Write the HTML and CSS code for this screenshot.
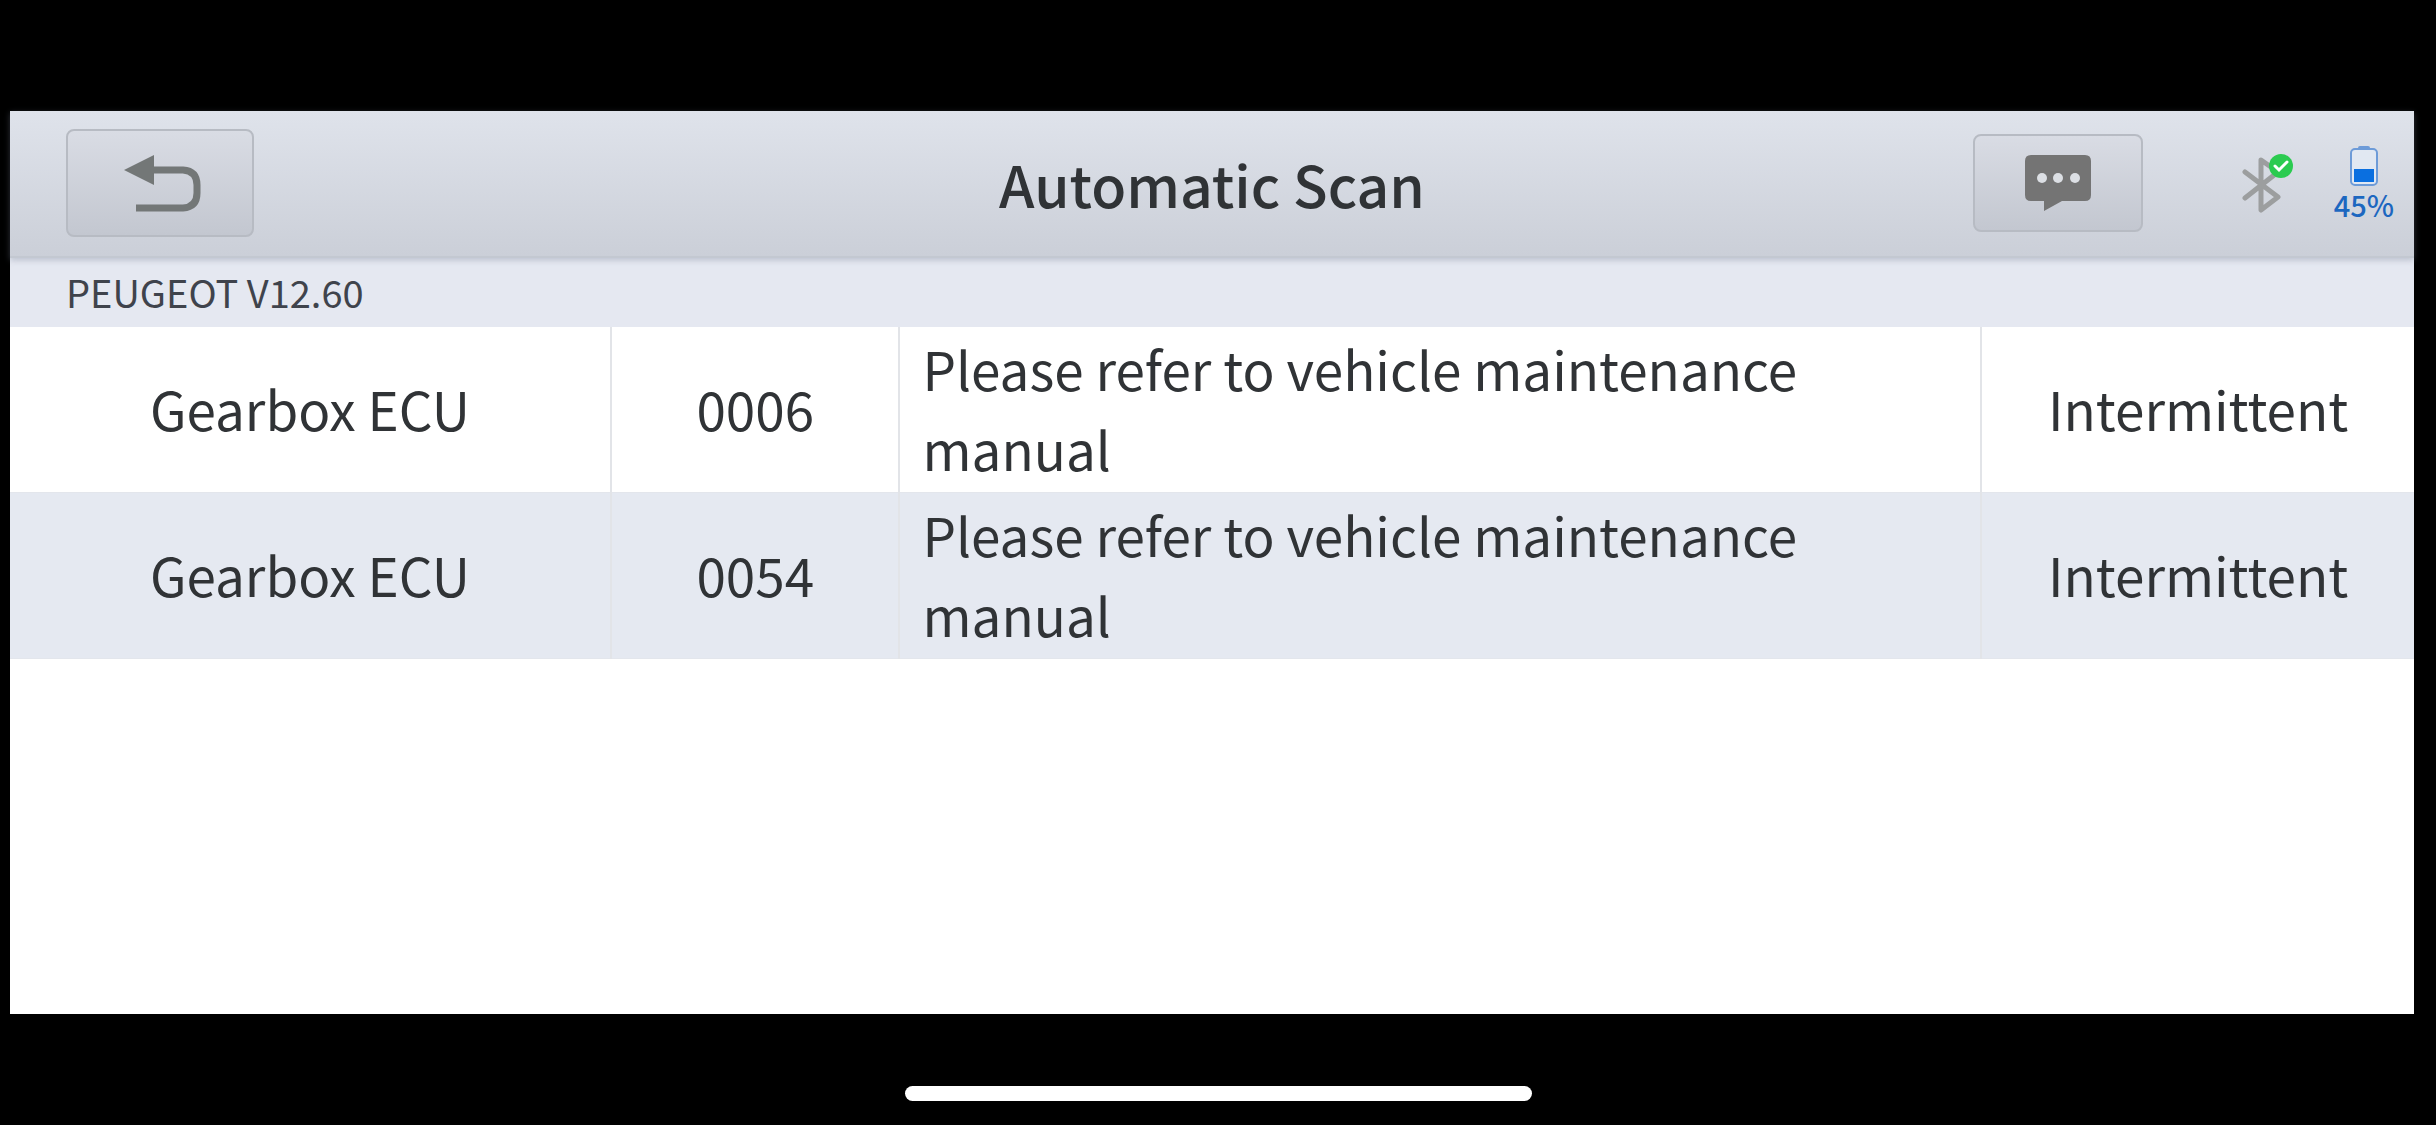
FILE: index.html
```html
<!DOCTYPE html>
<html lang="en">
<head>
    <meta charset="UTF-8">
    <meta name="viewport" content="width=device-width, initial-scale=1.0">
    <title>Automatic Scan</title>
    <link rel="stylesheet" href="styles.css">
</head>
<body>
    <div class="screen">
        <header class="topbar">
            <div class="topbar-left">
                <button type="button" class="btn btn-back" aria-label="Back">
                    <svg width="84" height="58" viewBox="-6 0 84 58">
                        <path d="M0 16 L30 1 V31 Z" fill="#737777"/>
                        <path d="M28 16 H59 Q73 17 73 31 V39 Q73 53 59 54 H12" fill="none" stroke="#737777" stroke-width="7"/>
                    </svg>
                </button>
            </div>
            <h1 class="title">Automatic Scan</h1>
            <div class="topbar-right">
                <button type="button" class="btn btn-chat" aria-label="Messages">
                    <svg width="66" height="56" viewBox="0 0 66 56">
                        <path d="M6 0 H60 Q66 0 66 6 V40 Q66 46 60 46 H37 L19 56 V46 H6 Q0 46 0 40 V6 Q0 0 6 0 Z" fill="#747474"/>
                        <circle cx="17" cy="23" r="5" fill="#dcdfe4"/>
                        <circle cx="33" cy="23" r="5" fill="#dcdfe4"/>
                        <circle cx="50" cy="23" r="5" fill="#dcdfe4"/>
                    </svg>
                </button>
                <svg class="bluetooth" width="52" height="60" viewBox="0 0 52 60">
                    <path d="M3 19 L36 44 L19 57 V7 L36 19 L3 45" fill="none" stroke="#9c9e9f" stroke-width="5" stroke-linejoin="round" stroke-linecap="round"/>
                    <circle cx="39" cy="13" r="12" fill="#2bcb50"/>
                    <path d="M33 13 L37 17 L45 9" fill="none" stroke="#fff" stroke-width="3" stroke-linecap="round"/>
                </svg>
                <div class="battery">
                    <svg width="28" height="40" viewBox="0 0 28 40">
                        <path d="M8 2 Q8 0 10 0 H18 Q20 0 20 2 V3 H8 Z" fill="#6d9bd8"/>
                        <rect x="1" y="3" width="26" height="36" rx="4" fill="#e1e8f2" stroke="#6d9bd8" stroke-width="2"/>
                        <rect x="4" y="23" width="20" height="13" fill="#0a6fe0"/>
                    </svg>
                    <span class="battery-text">45%</span>
                </div>
            </div>
        </header>
        <div class="version">PEUGEOT V12.60</div>
        <table class="codes">
            <colgroup>
                <col class="col-system">
                <col class="col-code">
                <col class="col-description">
                <col class="col-status">
            </colgroup>
            <tbody>
                <tr>
                    <td>Gearbox ECU</td>
                    <td>0006</td>
                    <td class="description">Please refer to vehicle maintenance manual</td>
                    <td>Intermittent</td>
                </tr>
                <tr>
                    <td>Gearbox ECU</td>
                    <td>0054</td>
                    <td class="description">Please refer to vehicle maintenance manual</td>
                    <td>Intermittent</td>
                </tr>
            </tbody>
        </table>
    </div>
    <div class="home">
        <div class="home-bar"></div>
    </div>
</body>
</html>
```
FILE: styles.css
```css
* {
    box-sizing: border-box;
}
body {
    display: flex;
    flex-direction: column;
    min-height: 100vh;
    margin: 0;
    padding-top: 111px;
    background-color: #000;
    color: #303336;
    font-family: "Noto Sans CJK SC", "Noto Sans", sans-serif;
}
.screen {
    flex: 1;
    margin: 0 22px 0 10px;
    background-color: #fff;
}
.topbar {
    position: relative;
    display: grid;
    grid-template-columns: 1fr auto 1fr;
    align-items: center;
    height: 147px;
    padding: 0 20px 2px;
    background: linear-gradient(#dfe3eb, #cbcfd8);
    border-bottom: 2px solid #c3c8d1;
    box-shadow: 0 2px 6px rgba(120, 130, 150, 0.4);
}
.topbar-left {
    display: flex;
    padding-left: 36px;
}
.topbar-right {
    display: flex;
    align-items: center;
    justify-content: flex-end;
}
.title {
    margin: 0;
    font-size: 57px;
    font-weight: 500;
    line-height: 80px;
}
.btn {
    display: flex;
    align-items: center;
    justify-content: center;
    padding: 0;
    background: linear-gradient(#d9dce4, #c3c7d0);
    border: 2px solid #b7bbc3;
    border-radius: 8px;
    cursor: pointer;
}
.btn-back {
    width: 188px;
    height: 108px;
}
.btn-chat {
    width: 170px;
    height: 98px;
}
.bluetooth {
    margin-left: 99px;
}
.battery {
    display: flex;
    flex-direction: column;
    align-items: center;
    margin-left: 40px;
    padding-top: 2px;
    color: #1c67c0;
}
.battery-text {
    font-size: 29px;
    font-weight: 500;
    line-height: 36px;
}
.version {
    padding: 7px 56px 9px;
    background-color: #e5e8f1;
    color: #3f434c;
    font-size: 38px;
    line-height: 53px;
}
.codes {
    width: 100%;
    table-layout: fixed;
    border-collapse: collapse;
    font-size: 53px;
    line-height: 80px;
}
.col-system {
    width: 25%;
}
.col-code {
    width: 12%;
}
.col-description {
    width: 45%;
}
.col-status {
    width: 18%;
}
.codes tr {
    border-bottom: 1px solid #e3e6ec;
}
.codes tr:nth-child(even) {
    background-color: #e5e9f1;
}
.codes td {
    padding: 1px 0 4px;
    border-right: 2px solid #e2e4e8;
    text-align: center;
}
.codes td:last-child {
    border-right: none;
}
.codes .description {
    padding-left: 22px;
    padding-right: 22px;
    text-align: left;
}
.home {
    display: flex;
    justify-content: center;
    padding: 72px 0 24px;
}
.home-bar {
    width: 627px;
    height: 15px;
    border-radius: 8px;
    background-color: #fff;
}
```
